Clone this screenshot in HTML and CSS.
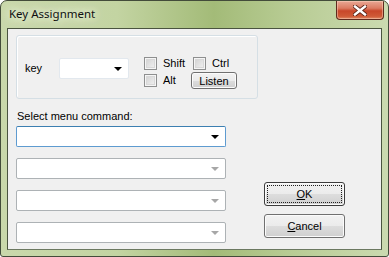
FILE: index.html
```html
<!doctype html>
<html lang="en">
<head>
    <meta charset="utf-8">
    <title>Key Assignment</title>
    <link rel="stylesheet" href="styles.css">
</head>
<body>
    <div class="window">
        <div class="titlebar">
            <span class="title">Key Assignment</span>
            <span class="close">
                <svg width="14" height="11" viewBox="0 0 14 11">
                    <path d="M2 1.5 L12 9.5 M12 1.5 L2 9.5" stroke="#5a2418" stroke-width="4.2" stroke-linecap="square"/>
                    <path d="M2 1.5 L12 9.5 M12 1.5 L2 9.5" stroke="#ffffff" stroke-width="2.4" stroke-linecap="square"/>
                </svg>
            </span>
        </div>
        <div class="client">
            <div class="left">
                <div class="group">
                    <span class="key-label">key</span>
                    <div class="combo combo-key"><span class="arrow"></span></div>
                    <div class="mods">
                        <label class="check"><span class="box"></span>Shift</label>
                        <label class="check"><span class="box"></span>Ctrl</label>
                        <label class="check"><span class="box"></span>Alt</label>
                        <button class="btn btn-listen">Listen</button>
                    </div>
                </div>
                <div class="cmd-label">Select menu command:</div>
                <div class="combo combo-cmd active"><span class="arrow"></span></div>
                <div class="combo combo-cmd disabled"><span class="arrow"></span></div>
                <div class="combo combo-cmd disabled"><span class="arrow"></span></div>
                <div class="combo combo-cmd disabled"><span class="arrow"></span></div>
            </div>
            <div class="right">
                <button class="btn btn-dialog btn-ok"><span class="focus"><u>O</u>K</span></button>
                <button class="btn btn-dialog"><u>C</u>ancel</button>
            </div>
        </div>
    </div>
</body>
</html>
```

FILE: styles.css
```css
body {
    margin: 0;
    background: #ffffff;
    font-family: "Liberation Sans", Arial, sans-serif;
    font-size: 11px;
    color: #000000;
}

.window {
    width: 389px;
    height: 257px;
    box-sizing: border-box;
    border: 1px solid #434c3a;
    border-radius: 7px 7px 3px 3px;
    background: linear-gradient(90deg, #c9d8ab 0%, #c3d4a2 30%, #a3bb78 55%, #b8cc94 75%, #cbdab0 100%);
    display: flex;
    flex-direction: column;
    overflow: hidden;
}

.titlebar {
    height: 27px;
    flex: none;
    display: flex;
    align-items: flex-start;
    padding-left: 8px;
}

.title {
    font-family: "Noto Sans", "Open Sans", sans-serif;
    font-size: 11.5px;
    line-height: 16px;
    padding-top: 5px;
    color: #101010;
    text-shadow: 0 0 6px #e8efd9, 0 0 10px #e8efd9, 0 0 14px #e8efd9;
}

.close {
    margin-left: auto;
    margin-right: 4px;
    width: 48px;
    height: 19px;
    box-sizing: border-box;
    border: 1px solid #5e2a1e;
    border-top: none;
    border-radius: 0 0 4px 4px;
    background: linear-gradient(#e9a895 0%, #dc7b62 40%, #c8472a 55%, #cf5a37 85%, #e08a66 100%);
    box-shadow: inset 0 0 0 1px rgba(255, 220, 200, 0.45);
    display: flex;
    align-items: center;
    justify-content: center;
}

.client {
    flex: 1;
    margin: 0 6px 6px 6px;
    border: 1px solid #4a5440;
    border-bottom-color: #6b7860;
    background: #f0f0f0;
    display: flex;
    padding: 6px 0 0 8px;
}

.left {
    width: 242px;
    display: flex;
    flex-direction: column;
}

.group {
    height: 64px;
    box-sizing: border-box;
    border: 1px solid #d5dfe5;
    border-radius: 3px;
    box-shadow: inset 1px 1px 0 #ffffff;
    display: flex;
    align-items: flex-start;
    padding: 21px 0 0 8px;
}

.key-label {
    width: 34px;
    line-height: 21px;
    margin-top: 1px;
}

.combo {
    position: relative;
    box-sizing: border-box;
    height: 21px;
    background: #ffffff;
}

.combo-key {
    width: 70px;
    margin-top: 1px;
    border: 1px solid #e2e8ee;
    border-radius: 2px;
}

.arrow {
    position: absolute;
    right: 6px;
    top: 8px;
    width: 0;
    height: 0;
    border-left: 4px solid transparent;
    border-right: 4px solid transparent;
    border-top: 4px solid #000000;
}

.mods {
    margin-left: 15px;
    display: grid;
    grid-template-columns: 49px auto;
    grid-template-rows: 13px 17px;
    row-gap: 2px;
    align-items: center;
}

.check {
    display: flex;
    align-items: center;
    line-height: 13px;
}

.box {
    width: 13px;
    height: 13px;
    box-sizing: border-box;
    border: 1px solid #8e8f8f;
    background: linear-gradient(135deg, #cfcfcf, #f4f4f4);
    box-shadow: inset 0 0 0 1px #f5f5f5, inset 0 0 0 2px #d8d8d8;
    margin-right: 6px;
}

.btn {
    font-family: "Liberation Sans", Arial, sans-serif;
    font-size: 11px;
    color: #000000;
    padding: 0;
    box-sizing: border-box;
    border: 1px solid #707070;
    border-radius: 3px;
    background: linear-gradient(#f2f2f2 0%, #ebebeb 50%, #dddddd 51%, #cfcfcf 100%);
    box-shadow: inset 0 0 0 1px #fbfbfb;
}

.btn-listen {
    width: 46px;
    height: 17px;
    margin-left: -2px;
    line-height: 14px;
}

.cmd-label {
    margin-top: 11px;
    line-height: 13px;
    padding-left: 1px;
}

.combo-cmd {
    width: 210px;
    margin-top: 11px;
    border: 1px solid #adb2b5;
    border-radius: 2px;
}

.combo-cmd.active {
    margin-top: 3px;
    border-color: #5e9bd0;
    border-top-color: #3c7fb1;
}

.combo-cmd.disabled .arrow {
    border-top-color: #a7a7a7;
}

.right {
    display: flex;
    flex-direction: column;
    margin-left: 6px;
}

.btn-dialog {
    width: 81px;
    height: 24px;
    margin-top: 8px;
}

.btn-ok {
    margin-top: 147px;
    border-color: #3c3c3c;
    padding: 2px;
}

.focus {
    display: block;
    height: 100%;
    box-sizing: border-box;
    border: 1px dotted #202020;
    line-height: 16px;
}
```
